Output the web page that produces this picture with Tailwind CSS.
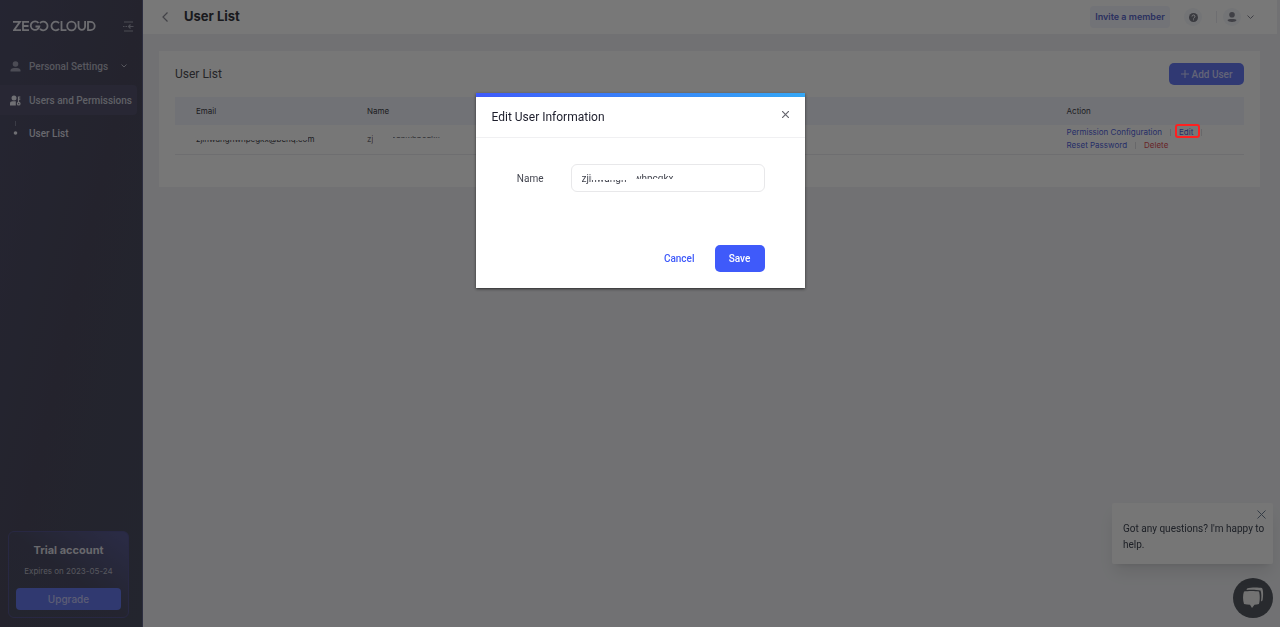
<!DOCTYPE html>
<html lang="en">
<head>
    <meta charset="UTF-8">
    <meta name="viewport" content="width=device-width, initial-scale=1.0">
    <title>User List</title>
    <script src="https://cdn.jsdelivr.net/npm/@tailwindcss/browser@4"></script>
</head>
<body class="flex min-h-screen bg-[#e2e3e6] text-[10px] text-[#3c3c44] font-['Roboto','Liberation_Sans',sans-serif]">

    <!-- Sidebar -->
    <aside class="flex w-[143px] shrink-0 flex-col border-r border-[#5a5c80] bg-linear-to-br from-[#4b4b64] via-[#48475b] to-[#464a5c] text-[10px] font-medium text-[#aeafbc]">
        <div class="flex items-center justify-between pt-5 pr-2 pl-[13px]">
            <svg class="h-3 w-[83px]" viewBox="0 0 83 12" fill="none" stroke="#d8d9e0" stroke-width="1.8" role="img" aria-label="ZEGOCLOUD">
                <path d="M0 1.800h7L1 10.200h7M16 1.800h-6v8.400h6M10 6h5.500M25.500 3A4.300 4.300 0 1 0 26.300 6.500H22.500M27 3.200A4.300 4.300 0 1 1 27 8.800M46 3.200A4.300 4.300 0 1 0 46 8.800M48.500 1v9.200h5"/>
                <circle cx="58.500" cy="6" r="4.300"/>
                <path d="M65.500 1v5.500a3.300 3.300 0 0 0 6.600 0V1M75 1.800h2.500a4.200 4.200 0 0 1 0 8.400H75z"/>
            </svg>
            <button type="button" aria-label="Collapse menu">
                <svg class="size-[11px]" viewBox="0 0 11 11" fill="none" stroke="#9899a8" stroke-width="1.2"><path d="M1 1h9M1 10h9M0 5.500h1.500M2.500 5.500h1.500M10.500 5.500H5.500M7.500 3.500l-2 2 2 2"/></svg>
            </button>
        </div>
        <nav class="flex flex-col pt-[19px] pr-[5px]">
            <a href="#" class="flex h-[30px] items-center gap-2 pr-[10px] pl-[10px]">
                <svg class="size-[11px]" viewBox="0 0 11 11" fill="#9899aa"><circle cx="5.500" cy="3" r="2.800"/><path d="M.5 10.500V9.500C.5 8 2 7 4 7h3c2 0 3.500 1 3.500 2.500v1z"/></svg>
                <span>Personal Settings</span>
                <svg class="ml-auto h-1 w-[6px]" viewBox="0 0 6 4" fill="none" stroke="currentColor"><path d="M.5.5L3 3 5.500.5"/></svg>
            </a>
            <a href="#" class="mt-1 flex h-[30px] items-center gap-2 rounded-r-sm bg-[#504f68] pl-[10px] whitespace-nowrap text-[#bfc0cc]">
                <svg class="size-[11px] shrink-0" viewBox="0 0 11 11" fill="#e0e0e8"><circle cx="4" cy="3" r="2.500"/><path d="M0 10.500V8.500C0 7 1 6.200 2.500 6.200h3.300v4.300z"/><path d="M8.500 1.500V7M8.500 2h1.800M8.500 4.200h1.800" stroke="#e0e0e8" stroke-width="1.200"/><circle cx="8.700" cy="8.700" r="1.900"/><circle cx="8.700" cy="8.700" r=".6" fill="#504f68"/></svg>
                <span>Users and Permissions</span>
            </a>
            <a href="#" class="flex h-9 items-center gap-2 pl-[10px] text-[#d0d0dc]">
                <svg class="h-6 w-[11px]" viewBox="0 0 11 24"><path d="M5.500 0v5" stroke="#77788c"/><circle cx="5.500" cy="12" r="1.800" fill="#e0e0e8"/></svg>
                <span>User List</span>
            </a>
        </nav>
        <section class="mt-auto mr-[13px] mb-[9px] ml-2 rounded-md border border-[#515186] bg-linear-to-tr from-[#474a5e] via-[#484960] to-[#56588e] p-[7px] pt-3 text-center font-['Inter',sans-serif]">
            <h2 class="text-[11px] leading-3 font-bold text-[#d0d0d8]">Trial account</h2>
            <p class="pt-[10px] text-[8px] leading-[10px] font-normal whitespace-nowrap">Expires on 2023-05-24</p>
            <button type="button" class="mt-3 h-[22px] w-full rounded-sm bg-[#6073e0] text-[10px] font-medium text-[#b8baea]">Upgrade</button>
        </section>
    </aside>

    <div class="min-w-0 flex-1">
        <header class="mr-[3px] flex h-[34px] items-center bg-[#f0f0f0] pr-[23px] pl-[19px]">
            <a href="#" aria-label="Back"><svg class="h-[10px] w-[6px]" viewBox="0 0 6 10" fill="none" stroke="#84848e" stroke-width="1.200"><path d="M5.500.5L1 5l4.500 4.500"/></svg></a>
            <h1 class="ml-4 font-['Inter',sans-serif] text-[13px] font-bold text-[#33343c]">User List</h1>
            <button type="button" class="ml-auto h-[22px] w-20 rounded-sm bg-[#e4e6ee] font-['Inter',sans-serif] text-[9px] font-semibold whitespace-nowrap text-[#5663c0]">Invite a member</button>
            <button type="button" aria-label="Help" class="ml-[14px] flex size-[18px] items-center justify-center rounded-full bg-[#e6e8ec] text-[#73747f]">
                <svg class="size-[9px]" viewBox="0 0 9 9"><circle cx="4.500" cy="4.500" r="4.500" fill="currentColor"/><path d="M3 3.500a1.500 1.500 0 1 1 2.200 1.300c-.5.300-.7.400-.7.900M4.500 6.400v.9" fill="none" stroke="#eceef2"/></svg>
            </button>
            <span class="ml-[14px] h-3 w-px bg-[#dcdce2]"></span>
            <button type="button" aria-label="Account" class="ml-[6px] flex items-center gap-[6px] text-[#80818c]">
                <span class="flex size-[18px] items-center justify-center rounded-full bg-[#e6e8ec]"><svg class="size-[10px]" viewBox="0 0 10 10" fill="currentColor"><circle cx="5" cy="2.800" r="2.800"/><path d="M.5 8C.5 6.500 9.500 6.500 9.500 8c0 2.500-9 2.500-9 0z"/></svg></span>
                <svg class="h-1 w-[7px]" viewBox="0 0 7 4" fill="none" stroke="currentColor"><path d="M.5.5l3 3 3-3"/></svg>
            </button>
        </header>

        <main class="mt-[17px] mr-5 ml-4 bg-[#efefef] px-4 pt-3 pb-8">
            <div class="flex items-center justify-between">
                <h2 class="text-[12px] text-[#4a4a50]">User List</h2>
                <button type="button" class="flex h-[22px] w-[75px] items-center justify-center gap-[3px] rounded-[5px] bg-[#6073e6] text-[10px] font-medium text-[#c6c9ee]">
                    <svg class="size-2" viewBox="0 0 8 8" stroke="currentColor"><path d="M4 0v8M0 4h8"/></svg>Add User
                </button>
            </div>
            <table class="mt-3 w-full table-fixed text-left font-['Inter',sans-serif] text-[8px] leading-[13px]">
                <thead>
                    <tr class="h-7 bg-[#e2e4ec]">
                        <th class="w-[16%] pl-[21px] font-normal">Email</th>
                        <th class="w-[66%] pl-[21px] font-normal">Name</th>
                        <th class="pl-[15px] font-normal">Action</th>
                    </tr>
                </thead>
                <tbody>
                    <tr class="h-[29px] border-b border-[#dcdce0]">
                        <td class="pl-[21px]"><span class="relative whitespace-nowrap">zjinwangnwhpcgkx@benq.com<span class="absolute top-0 left-0 h-[6px] w-28 bg-[#efefef]"></span></span></td>
                        <td class="pl-[21px]"><span class="relative whitespace-nowrap text-[#6c6c74]">zjinwangnwhpcqkx<span class="absolute bottom-0 left-6 h-[6px] w-14 bg-[#efefef]"></span><span class="absolute top-0 left-[6px] h-3 w-5 bg-[#efefef]"></span></span></td>
                        <td class="pl-[15px] text-[#4c5cd0]">
                            <div class="flex items-center gap-2"><a href="#" class="whitespace-nowrap">Permission Configuration</a><i class="h-[7px] w-px bg-[#d0d0d4]"></i><a href="#">Edit</a><i class="h-[7px] w-px bg-[#d0d0d4]"></i></div>
                            <div class="flex items-center gap-2"><a href="#">Reset Password</a><i class="h-[7px] w-px bg-[#d0d0d4]"></i><a href="#" class="text-[#d04850]">Delete</a></div>
                        </td>
                    </tr>
                </tbody>
            </table>
        </main>
    </div>

    <!-- Chat widget -->
    <div class="fixed right-[7px] bottom-[9px] flex flex-col items-end gap-[14px]">
        <div class="relative w-[161px] rounded-xs bg-[#ececec] pt-[18px] pr-2 pb-[11px] pl-[11px] text-[10px] leading-4 text-[#3c424e] shadow-lg shadow-black/10">
            Got any questions? I'm happy to help.
            <button type="button" aria-label="Close message" class="absolute top-[7px] right-[7px] leading-none"><svg class="size-[9px]" viewBox="0 0 9 9" stroke="#68788c"><path d="M.5.5l8 8M8.500.5l-8 8"/></svg></button>
        </div>
        <button type="button" aria-label="Open chat" class="flex size-10 items-center justify-center rounded-full bg-[#50545c]">
            <svg class="size-[22px]" viewBox="0 0 22 22" fill="#e4e4e4"><path d="M5 1.500C9 0 17 .3 20 1c1.500 2 1.300 9 .5 12.500l-1.500 1C19.500 10 19.600 6 18.500 3.500 14 2.500 8 2.500 4.500 3z"/><path d="M2 4.500c4-.7 11-.7 15 0 1 3 1 9 0 12.500-1.500.5-3 .6-4.500.7L10 21l-2-3.300C6 17.600 4 17.500 2 17 .7 13 .7 8 2 4.500z"/></svg>
        </button>
    </div>

    <div class="fixed inset-0 flex items-start justify-center bg-black/50 pt-[93px]">
        <div role="dialog" aria-labelledby="dialog-title" class="w-[329px] bg-white shadow-sm shadow-black/50">
            <div class="h-1 bg-linear-to-r from-[#3f5afa] to-[#35a7f5]"></div>
            <div class="flex h-[41px] items-center justify-between border-b border-[#f0f0f2] px-4">
                <h2 id="dialog-title" class="text-[12px] text-[#1d1e2c]">Edit User Information</h2>
                <button type="button" aria-label="Close" class="self-start pt-[14px]"><svg class="size-[7px]" viewBox="0 0 7 7" stroke="#66666e" stroke-width="1.200"><path d="M0 0l7 7M7 0L0 7"/></svg></button>
            </div>
            <form class="px-10 pt-[26px] pb-4">
                <div class="relative flex items-center justify-end gap-[27px]">
                    <label for="name" class="text-[10px] text-[#444650]">Name</label>
                    <input id="name" type="text" value="zjinwangnwwhpcqkx" class="h-[28px] w-[194px] rounded-md border border-[#e8e8ea] px-[10px] text-[10px] text-[#444650]">
                    <span class="absolute top-[6px] right-[137px] h-[10px] w-9 bg-white"></span>
                    <span class="absolute top-[6px] right-[129px] h-4 w-[9px] bg-white"></span>
                    <span class="absolute top-[15px] right-[88px] h-[7px] w-12 bg-white"></span>
                </div>
                <div class="flex justify-end gap-5 pt-[53px] text-[10px] font-medium">
                    <button type="button" class="text-[#3f5afa]">Cancel</button>
                    <button type="submit" class="h-[27px] w-[50px] rounded-[5px] bg-[#3f5afa] text-white">Save</button>
                </div>
            </form>
        </div>
    </div>

    <span class="absolute top-[124px] right-20 h-[14px] w-[25px] rounded-[3px] border-2 border-[#ff2020]"></span>
</body>
</html>
